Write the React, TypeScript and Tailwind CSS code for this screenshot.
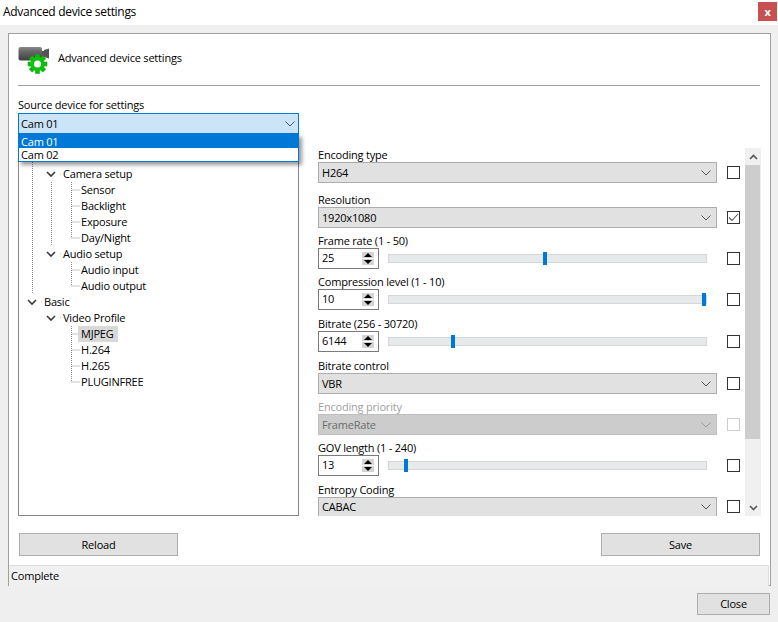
import React from "react";

const FONT = "font-['Open_Sans','Noto_Sans',sans-serif]";

function Chevron({ color = "#555555" }: { color?: string }) {
  return (
    <svg width="10" height="6" viewBox="0 0 10 6" className="shrink-0">
      <path d="M0.5 0.5 L5 5 L9.5 0.5" fill="none" stroke={color} strokeWidth="1" />
    </svg>
  );
}

function Combo({ value, disabled, clip }: { value: string; disabled?: boolean; clip?: boolean }) {
  return (
    <div
      className={`w-[399px] flex items-center justify-between pl-[3px] pr-[5px] border ${
        clip ? "h-[19px] border-b-0" : "h-[21px]"
      } ${disabled ? "bg-[#cccccc] border-[#bfbfbf] text-[#6d6d6d]" : "bg-[#e1e1e1] border-[#adadad] text-black"}`}
    >
      <span className="pt-px">{value}</span>
      <Chevron color={disabled ? "#9a9a9a" : "#555555"} />
    </div>
  );
}

function Spin({ value }: { value: string }) {
  return (
    <div className="w-[61px] h-[21px] border border-[#7a7a7a] bg-white flex items-center justify-between pl-[3px] pr-[4px] shrink-0">
      <span>{value}</span>
      <div className="flex flex-col gap-px">
        <div className="w-[12px] h-[6px] bg-[#d4d4d4] flex items-center justify-center">
          <svg width="8" height="4" viewBox="0 0 8 4"><path d="M4 0 L8 4 L0 4 Z" fill="#000" /></svg>
        </div>
        <div className="w-[12px] h-[6px] bg-[#d4d4d4] flex items-center justify-center">
          <svg width="8" height="4" viewBox="0 0 8 4"><path d="M0 0 L8 0 L4 4 Z" fill="#000" /></svg>
        </div>
      </div>
    </div>
  );
}

function Slider({ pos }: { pos: number }) {
  return (
    <div className="relative ml-[9px] w-[319px] h-[9px] bg-[#e7eaea] border border-[#d6d6d6]">
      <div className="absolute top-[-3px] w-[4px] h-[13px] bg-[#0078d7]" style={{ left: pos }} />
    </div>
  );
}

function Check({ checked, disabled }: { checked?: boolean; disabled?: boolean }) {
  return (
    <div
      className={`w-[13px] h-[13px] border bg-white shrink-0 flex items-center justify-center ${
        disabled ? "border-[#cccccc]" : "border-[#333333]"
      }`}
    >
      {checked && (
        <svg width="11" height="9" viewBox="0 0 11 9">
          <path d="M1 4.5 L4 7.5 L10 1" fill="none" stroke="#555555" strokeWidth="1.1" />
        </svg>
      )}
    </div>
  );
}

function Field({
  label,
  mt,
  disabled,
  children,
}: {
  label: string;
  mt: string;
  disabled?: boolean;
  children: React.ReactNode;
}) {
  return (
    <div className={mt}>
      <div className={`h-[14px] leading-[14px] ${disabled ? "text-[#a0a0a0]" : "text-black"}`}>{label}</div>
      {children}
    </div>
  );
}

function ComboCheckRow(p: { value: string; checked?: boolean; disabled?: boolean; clip?: boolean }) {
  return (
    <div className="flex items-center justify-between w-[422px]">
      <Combo value={p.value} disabled={p.disabled} clip={p.clip} />
      <Check checked={p.checked} disabled={p.disabled} />
    </div>
  );
}

function SpinRow({ value, pos }: { value: string; pos: number }) {
  return (
    <div className="flex items-center justify-between w-[422px]">
      <div className="flex items-center">
        <Spin value={value} />
        <Slider pos={pos} />
      </div>
      <Check />
    </div>
  );
}

function TreeGuides({ d, chev }: { d: string; chev?: number }) {
  return (
    <svg width="80" height="16" viewBox="0 0 80 16" className="absolute left-0 top-0">
      <path d={d} fill="none" stroke="#8a8a8a" strokeWidth="1" strokeDasharray="1 1" />
      {chev !== undefined && (
        <path
          d={`M${chev} 6 L${chev + 4} 10 L${chev + 8} 6`}
          fill="none"
          stroke="#3a3a3a"
          strokeWidth="1.6"
        />
      )}
    </svg>
  );
}

function TreeRow({
  label,
  d,
  chev,
  pl,
  selected,
}: {
  label?: string;
  d: string;
  chev?: number;
  pl: string;
  selected?: boolean;
}) {
  return (
    <div className="relative h-[16px] leading-[16px]">
      <TreeGuides d={d} chev={chev} />
      {label && (
        <div className={`relative ${pl}`}>
          <span className={`inline-block ${selected ? "px-[3px] w-[40px] bg-[#d9d9d9]" : "px-px"}`}>{label}</span>
        </div>
      )}
    </div>
  );
}

function GearCamIcon() {
  const teeth = [0, 45, 90, 135, 180, 225, 270, 315];
  return (
    <svg width="32" height="28" viewBox="0 0 32 28" className="shrink-0">
      <defs>
        <linearGradient id="cam" x1="0" y1="0" x2="0" y2="1">
          <stop offset="0" stopColor="#8a8a8a" />
          <stop offset="0.3" stopColor="#6a6a6a" />
          <stop offset="1" stopColor="#3f3f3f" />
        </linearGradient>
      </defs>
      <rect x="0.5" y="1" width="23.5" height="13.5" rx="2" fill="url(#cam)" />
      <path d="M24 5 L26 5 L26 4 L31 2.5 L31 12.5 L26 11 L24 11 Z" fill="#555555" />
      <g transform="translate(19.5 18)">
        {teeth.map((a) => (
          <rect key={a} x="-2.3" y="-9.8" width="4.6" height="5" fill="#0cb80c" transform={`rotate(${a})`} />
        ))}
        <circle r="7.2" fill="#10c010" />
        <circle r="3.5" fill="#ffffff" />
      </g>
    </svg>
  );
}

export default function App() {
  return (
    <div className={`${FONT} w-[778px] h-[622px] bg-[#efefef] text-[11px] tracking-[-0.2px] text-black flex flex-col overflow-hidden`}>
      <div className="h-[25px] bg-white flex items-start justify-between pl-[3px] pr-px shrink-0">
        <span className="text-[12px] tracking-[-0.3px] leading-[24px]">Advanced device settings</span>
        <div className="mt-[2px] w-[19px] h-[19px] bg-[#c75050] flex items-center justify-center text-white font-bold text-[11px] leading-none">
          x
        </div>
      </div>

      <div className="pt-[8px] pl-[8px]">
        <div className="w-[763px] h-[553px] border border-[#a0a0a0] bg-white flex flex-col">
          <div className="pl-[9px] pr-[10px]">
            <div className="flex items-center h-[52px] pt-[12px] pb-[11px] border-b border-[#a0a0a0]">
              <GearCamIcon />
              <span className="ml-[8px] -mt-[4px]">Advanced device settings</span>
            </div>
          </div>

          <div className="flex pl-[9px] mt-[12px] h-[418px]">
            <div className="w-[281px] shrink-0 flex flex-col">
              <div className="h-[15px] leading-[14px]">Source device for settings</div>
              <div className="relative z-10">
                <div className="h-[21px] border border-[#0078d7] bg-[#cce4f7] flex items-center justify-between pl-[2px] pr-[3px]">
                  <span className="pt-px">Cam 01</span>
                  <Chevron />
                </div>
                <div className="absolute left-0 top-[21px] w-[281px] h-[28px] bg-white border border-[#0078d7] border-t-0 shadow-[3px_3px_4px_rgba(0,0,0,0.4)]">
                  <div className="h-[14px] leading-[16px] bg-[#0078d7] text-white pl-[2px]">Cam 01</div>
                  <div className="h-[13px] leading-[14px] pl-[2px]">Cam 02</div>
                </div>
              </div>
              <div className="flex-1 border border-[#828790] bg-white pt-[15px]">
                <TreeRow d="M13.5 0 V16" pl="" />
                <TreeRow d="M13.5 0 V16 M41.5 8 H42" chev={28} label="Camera setup" pl="pl-[43px]" />
                <TreeRow d="M13.5 0 V16 M32.5 0 V16 M52.5 0 V16 M52.5 8 H61" pl="pl-[61px]" label="Sensor" />
                <TreeRow d="M13.5 0 V16 M32.5 0 V16 M52.5 0 V16 M52.5 8 H61" pl="pl-[61px]" label="Backlight" />
                <TreeRow d="M13.5 0 V16 M32.5 0 V16 M52.5 0 V16 M52.5 8 H61" pl="pl-[61px]" label="Exposure" />
                <TreeRow d="M13.5 0 V16 M32.5 0 V16 M52.5 0 V8 H61" pl="pl-[61px]" label="Day/Night" />
                <TreeRow d="M13.5 0 V16 M41.5 8 H42" chev={28} label="Audio setup" pl="pl-[43px]" />
                <TreeRow d="M13.5 0 V16 M52.5 0 V16 M52.5 8 H61" pl="pl-[61px]" label="Audio input" />
                <TreeRow d="M13.5 0 V16 M52.5 0 V8 H61" pl="pl-[61px]" label="Audio output" />
                <TreeRow d="M22.5 8 H23" chev={9} label="Basic" pl="pl-[24px]" />
                <TreeRow d="M41.5 8 H42" chev={28} label="Video Profile" pl="pl-[43px]" />
                <TreeRow d="M52.5 0 V16 M52.5 8 H59" pl="pl-[59px]" label="MJPEG" selected />
                <TreeRow d="M52.5 0 V16 M52.5 8 H61" pl="pl-[61px]" label="H.264" />
                <TreeRow d="M52.5 0 V16 M52.5 8 H61" pl="pl-[61px]" label="H.265" />
                <TreeRow d="M52.5 0 V8 H61" pl="pl-[61px]" label="PLUGINFREE" />
              </div>
            </div>

            <div className="ml-[19px] w-[443px] mt-[50px] h-[368px] flex justify-between overflow-hidden">
              <div className="w-[423px] overflow-hidden">
                <Field label="Encoding type" mt="mt-0">
                  <ComboCheckRow value="H264" />
                </Field>
                <Field label="Resolution" mt="mt-[10px]">
                  <ComboCheckRow value="1920x1080" checked />
                </Field>
                <Field label="Frame rate (1 - 50)" mt="mt-[6px]">
                  <SpinRow value="25" pos={154} />
                </Field>
                <Field label="Compression level (1 - 10)" mt="mt-[6px]">
                  <SpinRow value="10" pos={313} />
                </Field>
                <Field label="Bitrate (256 - 30720)" mt="mt-[7px]">
                  <SpinRow value="6144" pos={62} />
                </Field>
                <Field label="Bitrate control" mt="mt-[7px]">
                  <ComboCheckRow value="VBR" />
                </Field>
                <Field label="Encoding priority" mt="mt-[6px]" disabled>
                  <ComboCheckRow value="FrameRate" disabled />
                </Field>
                <Field label="GOV length (1 - 240)" mt="mt-[6px]">
                  <SpinRow value="13" pos={15} />
                </Field>
                <Field label="Entropy Coding" mt="mt-[7px]">
                  <ComboCheckRow value="CABAC" clip />
                </Field>
              </div>
              <div className="w-[16px] bg-[#f0f0f0] flex flex-col">
                <div className="h-[17px] flex items-center justify-center">
                  <svg width="9" height="6" viewBox="0 0 9 6">
                    <path d="M1 5 L4.5 1.5 L8 5" fill="none" stroke="#555555" strokeWidth="1.6" />
                  </svg>
                </div>
                <div className="h-[274px] w-[15px] bg-[#cdcdcd]" />
                <div className="flex-1 flex items-end justify-center pb-[5px]">
                  <svg width="9" height="6" viewBox="0 0 9 6">
                    <path d="M1 1 L4.5 4.5 L8 1" fill="none" stroke="#555555" strokeWidth="1.6" />
                  </svg>
                </div>
              </div>
            </div>
          </div>

          <div className="flex justify-between pl-[10px] pr-[10px] mt-[17px]">
            <button className="w-[159px] h-[23px] pt-px bg-[#e1e1e1] border border-[#adadad]">Reload</button>
            <button className="w-[159px] h-[23px] pt-px bg-[#e1e1e1] border border-[#adadad]">Save</button>
          </div>

          <div className="mt-[9px] flex-1 bg-[#f0f0f0] border-t border-[#dcdcdc] pl-[2px] leading-[20px] border-r mr-px">
            Complete
          </div>
        </div>
      </div>

      <div className="flex justify-end pr-[8px] mt-[7px]">
        <button className="w-[73px] h-[22px] bg-[#e1e1e1] border border-[#adadad]">Close</button>
      </div>
    </div>
  );
}
